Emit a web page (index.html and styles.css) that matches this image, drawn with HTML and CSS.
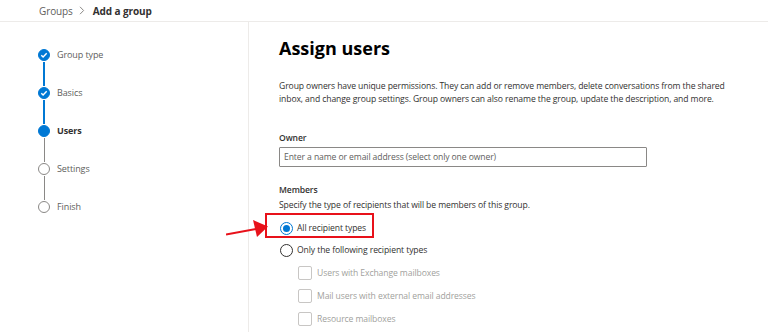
FILE: index.html
```html
<!DOCTYPE html>
<html>
<head>
  <meta charset="utf-8">
  <title>Add a group - Assign users</title>
  <link rel="stylesheet" href="styles.css">
</head>
<body>
  <div class="crumbs">
    <span class="crumb">Groups</span>
    <svg class="sep" width="6" height="9" viewBox="0 0 6 9"><path d="M1 0.8l3.6 3.7L1 8.2" fill="none" stroke="#8a8886" stroke-width="1"/></svg>
    <span class="crumb current">Add a group</span>
  </div>
  <div class="main">
    <div class="nav">
      <div class="step done">
        <div class="marker"><span class="dot"><svg viewBox="0 0 12 12" width="12" height="12"><path d="M3.3 6.2l1.8 1.8 3.6-3.8" fill="none" stroke="#fff" stroke-width="1.4"/></svg></span><span class="line"></span></div>
        <span class="label">Group type</span>
      </div>
      <div class="step done">
        <div class="marker"><span class="dot"><svg viewBox="0 0 12 12" width="12" height="12"><path d="M3.3 6.2l1.8 1.8 3.6-3.8" fill="none" stroke="#fff" stroke-width="1.4"/></svg></span><span class="line"></span></div>
        <span class="label">Basics</span>
      </div>
      <div class="step active">
        <div class="marker"><span class="dot"></span><span class="line"></span></div>
        <span class="label">Users</span>
      </div>
      <div class="step">
        <div class="marker"><span class="dot"></span><span class="line"></span></div>
        <span class="label">Settings</span>
      </div>
      <div class="step last">
        <div class="marker"><span class="dot"></span></div>
        <span class="label">Finish</span>
      </div>
    </div>
    <div class="content">
      <h1>Assign users</h1>
      <p class="intro">Group owners have unique permissions. They can add or remove members, delete conversations from the shared inbox, and change group settings. Group owners can also rename the group, update the description, and more.</p>
      <div class="field-label">Owner</div>
      <div class="textbox">Enter a name or email address (select only one owner)</div>
      <div class="field-label members">Members</div>
      <div class="hint">Specify the type of recipients that will be members of this group.</div>
      <div class="radios">
        <div class="radio checked">
          <span class="circle"></span><span>All recipient types</span>
          <span class="callout"></span>
          <svg class="arrow" width="48" height="24" viewBox="0 0 48 24"><path d="M0 18.5L30 13" stroke="#e8111a" stroke-width="2.2" fill="none"/><path d="M27 4L42 10.5 31 21z" fill="#e8111a"/></svg>
        </div>
        <div class="radio">
          <span class="circle"></span><span>Only the following recipient types</span>
        </div>
      </div>
      <div class="checks">
        <div class="check"><span class="box"></span><span>Users with Exchange mailboxes</span></div>
        <div class="check"><span class="box"></span><span>Mail users with external email addresses</span></div>
        <div class="check"><span class="box"></span><span>Resource mailboxes</span></div>
      </div>
    </div>
  </div>
</body>
</html>
```

FILE: styles.css
```css
html, body {
  margin: 0;
  padding: 0;
  background-color: #fff;
  color: #323130;
  font-family: "Open Sans", "Noto Sans", sans-serif;
  font-size: 8.6px;
  letter-spacing: -0.1px;
  overflow: hidden;
}
.crumbs {
  height: 21px;
  padding-left: 39px;
  display: flex;
  align-items: center;
  gap: 6px;
  font-size: 10px;
  line-height: 18px;
  border-bottom: 1px solid #edebe9;
}
.crumbs .crumb {
  color: #605e5c;
}
.crumbs .current {
  color: #323130;
  font-weight: bold;
  margin-left: 2px;
}
.main {
  display: flex;
  height: 310px;
}
.nav {
  width: 210px;
  padding: 27px 0 0 38px;
  border-right: 1px solid #edebe9;
}
.step {
  display: flex;
  gap: 7px;
}
.marker {
  display: flex;
  flex-direction: column;
  align-items: center;
  width: 12px;
}
.dot {
  width: 10px;
  height: 10px;
  border-radius: 50%;
  border: 1px solid #8a8886;
  background: #fff;
  display: flex;
}
.dot svg {
  margin: -1px;
}
.step.done .dot, .step.active .dot {
  background: #0078d4;
  border-color: #0078d4;
}
.line {
  width: 1px;
  height: 24px;
  margin: 1px 0;
  background: #8a8886;
}
.step.done .line {
  background: #0078d4;
  width: 2px;
}
.label {
  font-size: 9px;
  line-height: 12px;
  color: #605e5c;
}
.step.active .label {
  color: #323130;
  font-weight: bold;
}
.content {
  padding-left: 30px;
}
h1 {
  margin: 14px 0 0 0;
  font-size: 18px;
  line-height: 24px;
  font-weight: bold;
  letter-spacing: 0;
  color: #000;
}
.intro {
  margin: 20px 0 0 0;
  width: 450px;
  line-height: 13px;
}
.field-label {
  margin-top: 26px;
  font-weight: 600;
  line-height: 13px;
  color: #323130;
}
.field-label.members {
  margin-top: 17px;
}
.textbox {
  margin-top: 2px;
  width: 362px;
  height: 18px;
  line-height: 18px;
  padding-left: 4px;
  border: 1px solid #8a8886;
  color: #605e5c;
  border-radius: 1px;
}
.hint {
  margin-top: 2px;
  line-height: 13px;
}
.radios {
  margin-top: 5px;
}
.radio {
  position: relative;
  display: flex;
  align-items: center;
  gap: 4px;
  margin-left: 1px;
  height: 22px;
}
.radio .circle {
  width: 11px;
  height: 11px;
  border: 1px solid #323130;
  border-radius: 50%;
  display: flex;
  align-items: center;
  justify-content: center;
}
.radio.checked .circle {
  border-color: #0078d4;
}
.radio.checked .circle::after {
  content: "";
  width: 7px;
  height: 7px;
  border-radius: 50%;
  background: #0078d4;
}
.callout {
  position: absolute;
  left: -15px;
  top: -4px;
  width: 105px;
  height: 21px;
  border: 2px solid #e8111a;
}
.arrow {
  position: absolute;
  left: -54px;
  top: -1px;
}
.checks {
  padding-left: 19px;
  padding-top: 0;
  color: #a19f9d;
}
.check {
  display: flex;
  align-items: center;
  gap: 5px;
  height: 23px;
}
.check .box {
  width: 12px;
  height: 12px;
  border: 1px solid #c8c6c4;
  border-radius: 2px;
}
```
